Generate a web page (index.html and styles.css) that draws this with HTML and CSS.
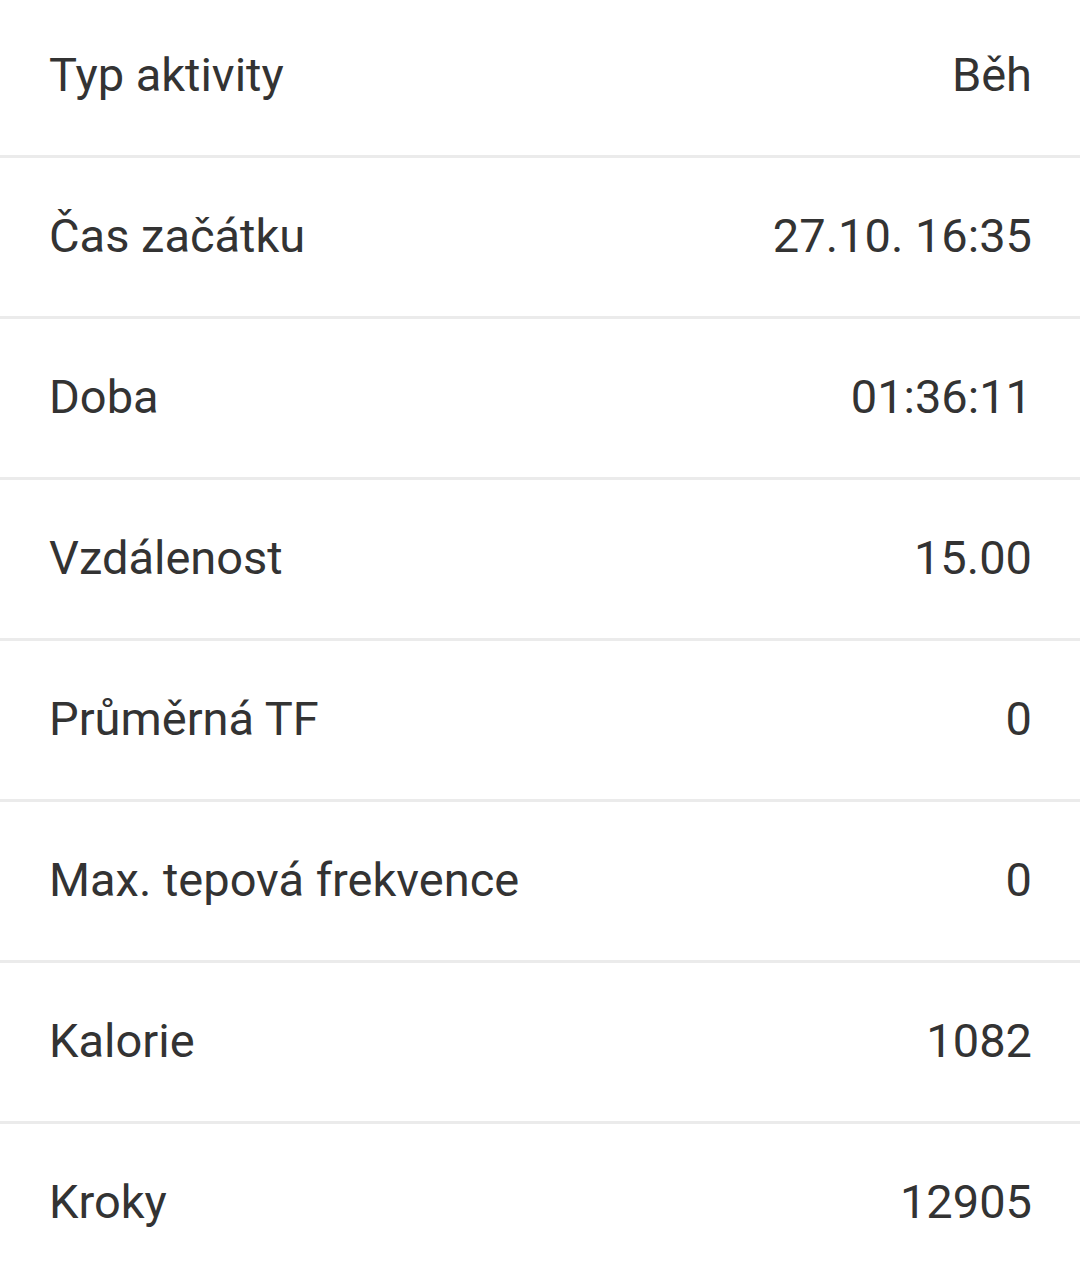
FILE: index.html
```html
<!DOCTYPE html>
<html lang="cs">
<head>
<meta charset="utf-8">
<link rel="stylesheet" href="styles.css">
</head>
<body>
<ul class="list">
  <li class="row"><span class="label">Typ aktivity</span><span class="value">Běh</span></li>
  <li class="row"><span class="label">Čas začátku</span><span class="value">27.10. 16:35</span></li>
  <li class="row"><span class="label">Doba</span><span class="value">01:36:11</span></li>
  <li class="row"><span class="label">Vzdálenost</span><span class="value">15.00</span></li>
  <li class="row"><span class="label">Průměrná TF</span><span class="value">0</span></li>
  <li class="row"><span class="label">Max. tepová frekvence</span><span class="value">0</span></li>
  <li class="row"><span class="label">Kalorie</span><span class="value">1082</span></li>
  <li class="row"><span class="label">Kroky</span><span class="value">12905</span></li>
</ul>
</body>
</html>
```
FILE: styles.css
```css
html, body {
  margin: 0;
  padding: 0;
  background: #ffffff;
}
body {
  font-family: Roboto, "Noto Sans", sans-serif;
  color: #333333;
  overflow: hidden;
}
.list {
  list-style: none;
  margin: -3px 0 0 0;
  padding: 0;
}
.row {
  display: flex;
  justify-content: space-between;
  align-items: center;
  height: 155px;
  padding: 0 48px 3px 49px;
  border-bottom: 3px solid #ebebeb;
  box-sizing: content-box;
  font-size: 47px;
  line-height: 1;
}
.row:last-child {
  border-bottom: none;
}
```
